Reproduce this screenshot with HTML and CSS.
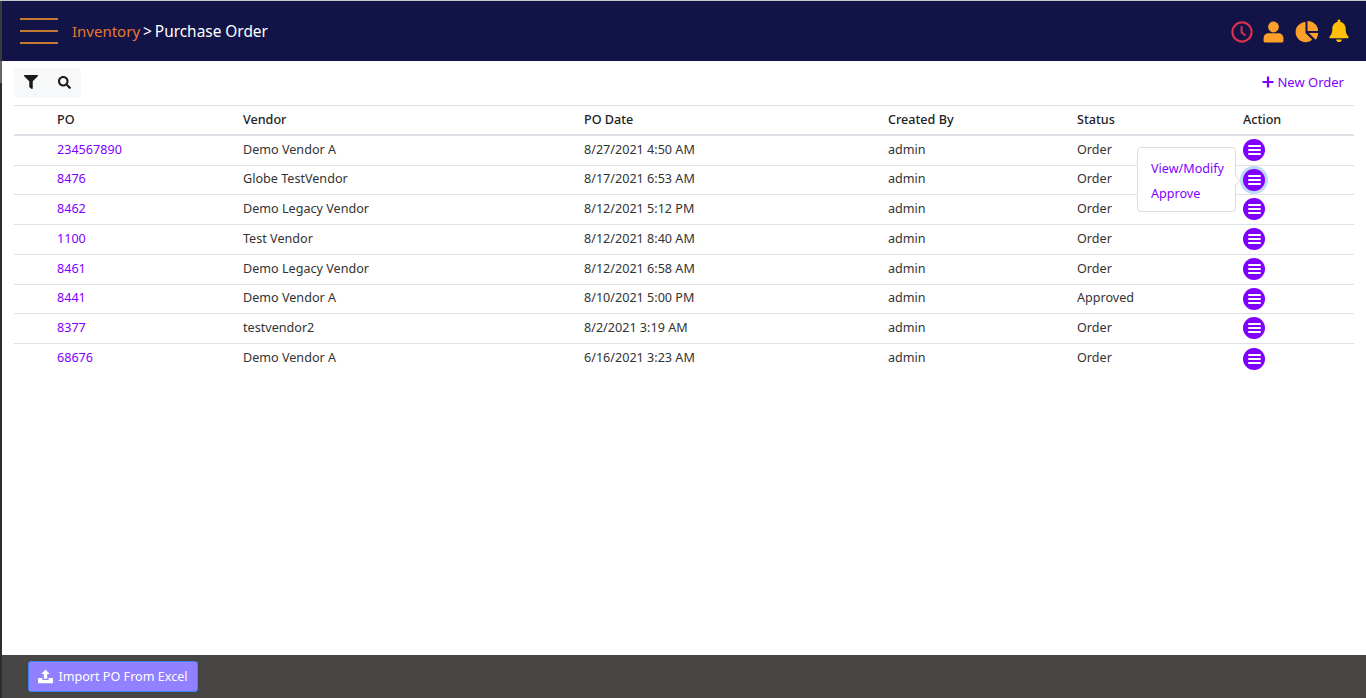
FILE: index.html
```html
<!DOCTYPE html>
<html lang="en">
<head>
<meta charset="utf-8">
<title>Purchase Order</title>
<link rel="stylesheet" href="styles.css">
</head>
<body>
<div class="app">
  <header class="topbar">
    <div class="burger"><span></span><span></span><span></span></div>
    <div class="crumbs"><span class="crumb-root">Inventory</span><span class="crumb-sep">&gt;</span><span class="crumb-page">Purchase Order</span></div>
    <div class="top-icons">
      <svg class="ti" width="22" height="22" viewBox="0 0 22 22"><circle cx="11" cy="11" r="9.6" fill="none" stroke="#d8304a" stroke-width="2.2"/><path d="M10.600 5.200v6.400l4 2.900" fill="none" stroke="#d8304a" stroke-width="2"/></svg>
      <svg class="ti" width="21" height="22" viewBox="0 0 21 22"><circle cx="10.500" cy="6" r="5.400" fill="#fd9f2b"/><path d="M.6 20v-3C.6 14 3 12.300 5.800 12.300h9.400c2.800 0 5.200 1.700 5.200 4.700v3c0 .8-.6 1.400-1.300 1.400H1.900C1.200 21.400.6 20.800.6 20z" fill="#fd9f2b"/></svg>
      <svg class="ti" width="24" height="22" viewBox="0 0 24 22"><path d="M10.500 1C4.900 1.300.6 5.700.6 11.100c0 5.600 4.500 10.100 10.100 10.100 2.500 0 4.800-.9 6.500-2.400l-6.700-6.800z" fill="#fd9f2b"/><path d="M12.500 0v9.900h10.600C23.100 4.400 18.400 0 12.500 0z" fill="#fd9f2b"/><path d="M13.800 11.900l6.900 6.800c1.400-1.500 2.200-4.300 2.500-6.800z" fill="#fd9f2b"/></svg>
      <svg class="ti" width="20" height="24" viewBox="0 0 20 24"><path d="M10 .6c-.9 0-1.400.6-1.400 1.400v.9C5.400 3.500 3.300 6.300 3.300 9.800c0 5-1.600 6.400-2.700 7.800-.5.700-.2 1.700.8 1.700h17.200c1 0 1.300-1 .8-1.700-1.100-1.400-2.700-2.800-2.700-7.800 0-3.500-2.100-6.300-5.300-6.900V2c0-.8-.5-1.400-1.400-1.400z" fill="#ffc107"/><path d="M7.200 20.400h5.600c0 1.500-1.200 2.700-2.800 2.700s-2.800-1.200-2.800-2.700z" fill="#ffc107"/></svg>
    </div>
  </header>

  <main class="content">
    <div class="toolbar">
      <div class="tools">
        <svg width="14" height="14" viewBox="0 0 512 512"><path fill="#1a1a1a" d="M487 0H25C3 0-9 27 7 43l185 185v204c0 8 4 15 10 20l80 56c16 11 38 0 38-20V228L505 43c16-16 4-43-18-43z"/></svg>
        <svg width="13" height="13" viewBox="0 0 512 512"><path fill="#1a1a1a" d="M505 443L405 343c-4-4-11-7-17-7h-16c28-35 44-80 44-128C416 93 323 0 208 0S0 93 0 208s93 208 208 208c48 0 93-16 128-44v16c0 6 3 13 7 17l100 100c9 9 25 9 34 0l28-28c9-10 9-25 0-34zM208 336c-71 0-128-57-128-128S137 80 208 80s128 57 128 128-57 128-128 128z"/></svg>
      </div>
      <a class="new-order"><svg width="12" height="12" viewBox="0 0 12 12"><path d="M6 .5v11M.5 6h11" stroke="#8000ff" stroke-width="2.200" fill="none"/></svg>New Order</a>
    </div>

    <div class="table">
      <div class="row head"><span>PO</span><span>Vendor</span><span>PO Date</span><span>Created By</span><span>Status</span><span>Action</span></div>
      <div class="row"><a>234567890</a><span>Demo Vendor A</span><span>8/27/2021 4:50 AM</span><span>admin</span><span>Order</span><button class="act"><i></i><i></i><i></i></button></div>
      <div class="row"><a>8476</a><span>Globe TestVendor</span><span>8/17/2021 6:53 AM</span><span>admin</span><span>Order</span><button class="act focus"><i></i><i></i><i></i></button></div>
      <div class="row"><a>8462</a><span>Demo Legacy Vendor</span><span>8/12/2021 5:12 PM</span><span>admin</span><span>Order</span><button class="act"><i></i><i></i><i></i></button></div>
      <div class="row"><a>1100</a><span>Test Vendor</span><span>8/12/2021 8:40 AM</span><span>admin</span><span>Order</span><button class="act"><i></i><i></i><i></i></button></div>
      <div class="row"><a>8461</a><span>Demo Legacy Vendor</span><span>8/12/2021 6:58 AM</span><span>admin</span><span>Order</span><button class="act"><i></i><i></i><i></i></button></div>
      <div class="row"><a>8441</a><span>Demo Vendor A</span><span>8/10/2021 5:00 PM</span><span>admin</span><span>Approved</span><button class="act"><i></i><i></i><i></i></button></div>
      <div class="row"><a>8377</a><span>testvendor2</span><span>8/2/2021 3:19 AM</span><span>admin</span><span>Order</span><button class="act"><i></i><i></i><i></i></button></div>
      <div class="row"><a>68676</a><span>Demo Vendor A</span><span>6/16/2021 3:23 AM</span><span>admin</span><span>Order</span><button class="act"><i></i><i></i><i></i></button></div>
    </div>

    <div class="popover">
      <a>View/Modify</a>
      <a>Approve</a>
    </div>
  </main>

  <footer class="footer">
    <button class="import"><svg width="15" height="15" viewBox="0 0 16 15"><path d="M8 0l4.600 4.800H9.800v5H6.200v-5H3.400z" fill="#fff"/><path d="M.8 9.200h3.900v1.900h6.600V9.200h3.900c.4 0 .8.400.8.800v4c0 .4-.4.800-.8.800H.8c-.4 0-.8-.4-.8-.8v-4c0-.4.400-.8.800-.8z" fill="#fff"/></svg>Import PO From Excel</button>
  </footer>
</div>
</body>
</html>
```

FILE: styles.css
```css
* { box-sizing: border-box; }
html, body { margin: 0; height: 100%; }
body {
  font-family: "Noto Sans", "Open Sans", sans-serif;
  font-size: 12.6px;
  color: #333;
  background: linear-gradient(#c8c8c8 0 1px, #3a3a3a 1px 61px, #666 61px 83px, #2d2d2d 83px);
  overflow: hidden;
}
.app {
  height: 698px;
  margin-left: 2px;
  padding-top: 1px;
  display: flex;
  flex-direction: column;
}
.topbar {
  height: 60px;
  background: #121447;
  display: flex;
  align-items: center;
  padding: 0 17px 0 18px;
  flex: none;
}
.burger { width: 38px; display: flex; flex-direction: column; gap: 10px; }
.burger span { height: 2px; background: #c57a33; display: block; }
.crumbs { margin-left: 14px; font-size: 15.4px; display: flex; gap: 3px; }
.crumb-root { color: #e8792e; font-size: 15px; }
.crumb-sep, .crumb-page { color: #fff; }
.top-icons { margin-left: auto; display: flex; align-items: flex-end; gap: 10.5px; height: 24px; }
.ti { display: block; }
.content { flex: 1; position: relative; padding: 0 12px; background: #fff; }
.toolbar { height: 44px; display: flex; align-items: flex-start; justify-content: space-between; padding-top: 7px; }
.tools {
  width: 67px; height: 30px;
  background: #f6f8fa;
  border-radius: 3px;
  display: flex; align-items: center; gap: 20px;
  padding: 0 0 2px 10px;
}
.new-order { color: #8000ff; display: flex; align-items: center; gap: 3px; padding: 5px 10px 0 0; font-size: 13px; }
.table { border-top: 1px solid #e0e0e0; }
.row {
  display: grid;
  grid-template-columns: 186px 341px 304px 189px 166px 1fr;
  align-items: center;
  height: 29.75px;
  padding-left: 43px;
  border-bottom: 1px solid #dee2e6;
}
.row > span, .row > a { padding-bottom: 2.5px; }
.row:last-child { border-bottom: 0; }
.row.head { height: 29.9px; border-bottom-width: 2px; color: #222; font-weight: 500; }
.row.head > span { padding-bottom: 0; }
.row a { color: #8000ff; }
.act {
  width: 22px; height: 22px;
  margin-bottom: .6px;
  border-radius: 50%;
  border: 0; padding: 0;
  background: #8000ff;
  display: flex; flex-direction: column; align-items: center; justify-content: center; gap: 2px;
}
.act i { width: 13px; height: 2px; background: #fff; border-radius: 1px; display: block; }
.act.focus { box-shadow: 0 0 0 3px #bcd9f7; }
.popover {
  position: absolute;
  left: 1135px; top: 86px;
  width: 99px; height: 65px;
  background: #fff;
  border: 1px solid #ddd;
  border-radius: 4px;
  padding: 12px 0 0 13px;
  display: flex; flex-direction: column; gap: 7px;
  color: #8000ff;
  line-height: 18px;
}
.popover::after {
  content: "";
  position: absolute;
  right: -4px; top: 28px;
  width: 8px; height: 8px;
  background: #fff;
  border-top: 1px solid #ddd;
  border-right: 1px solid #ddd;
  transform: rotate(45deg);
}
.footer {
  height: 43px;
  flex: none;
  background: #484644;
  display: flex; align-items: center;
  padding-left: 26px;
}
.import {
  height: 31px; width: 170px;
  background: #9180ff;
  border: 1px solid #3f82f4;
  border-radius: 3px;
  color: #fff;
  font: inherit;
  display: flex; align-items: center; justify-content: center; gap: 5px;
  padding: 0;
}
```
